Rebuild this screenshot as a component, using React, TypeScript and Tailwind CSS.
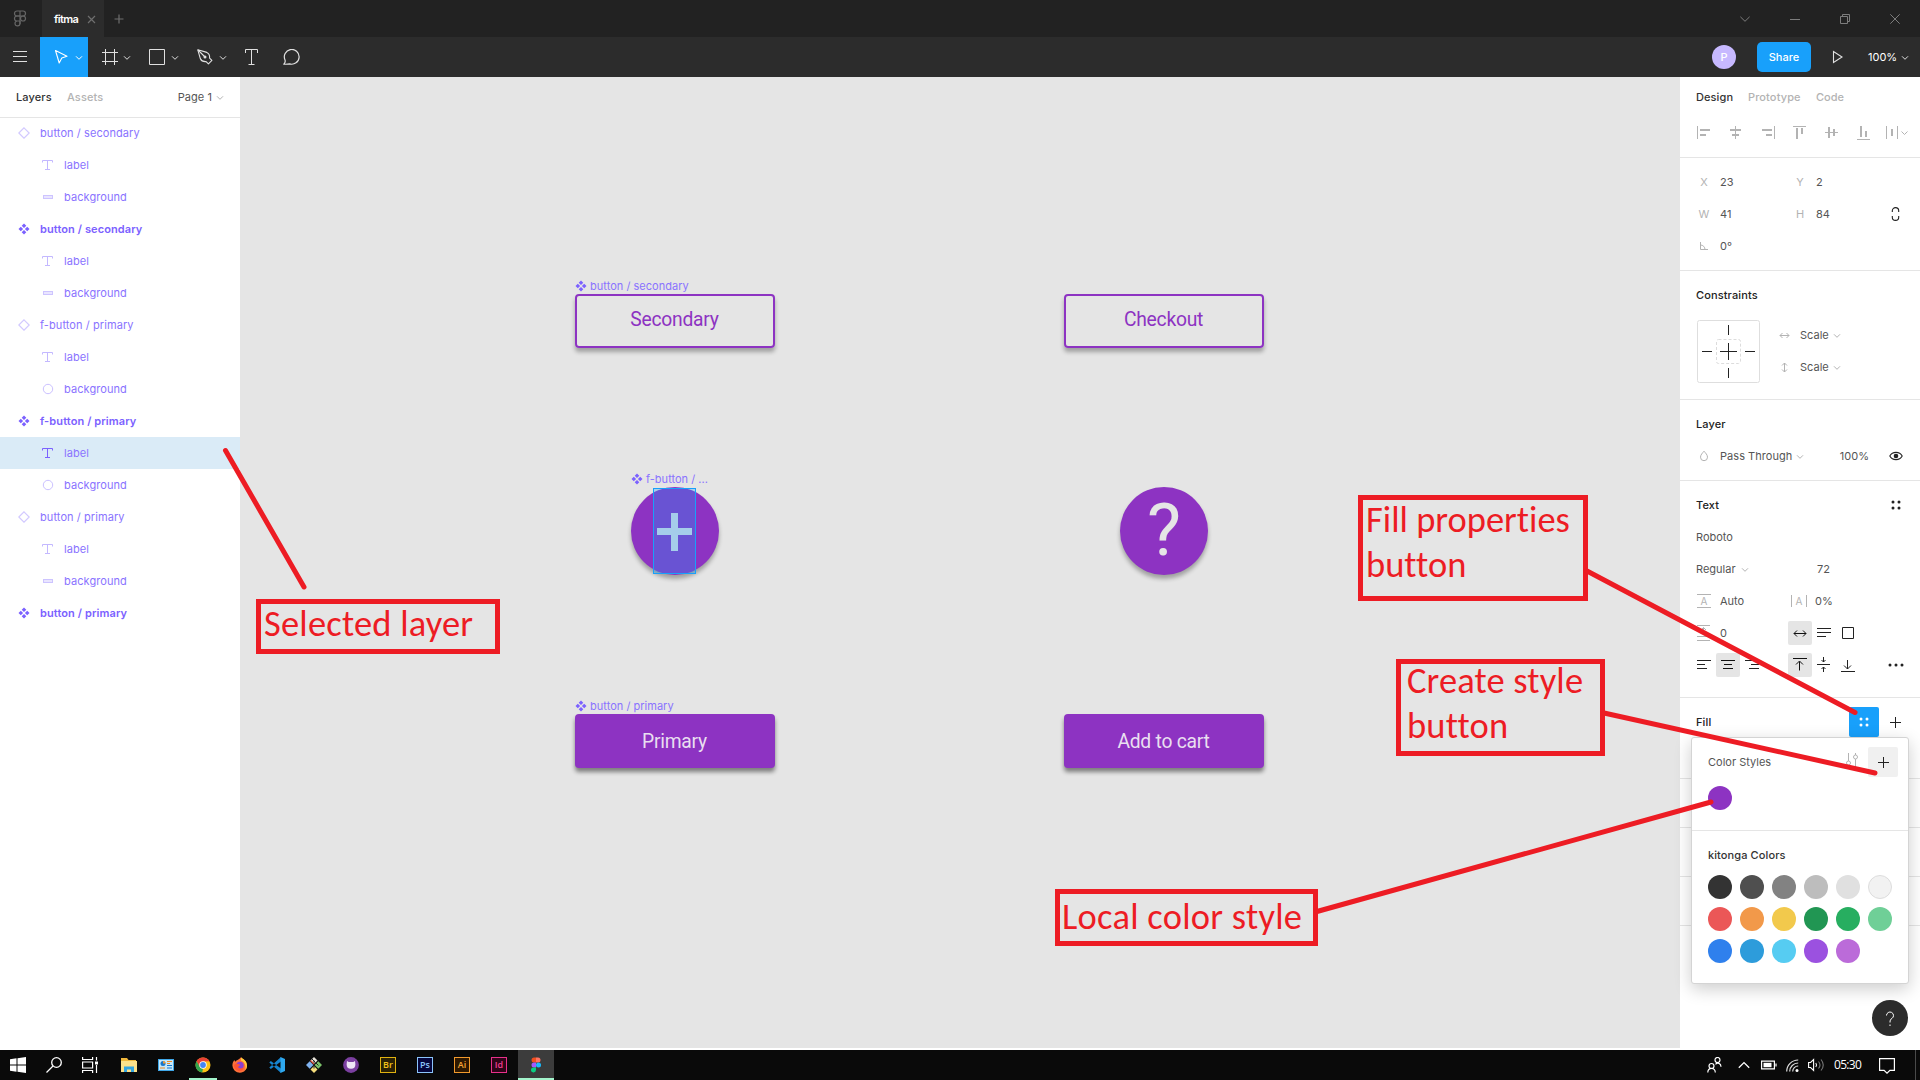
import React from 'react';

type IconProps = {
  w?: number;
  h?: number;
  className?: string;
  sw?: number;
  children: React.ReactNode;
};

function Icon({ w = 16, h = 16, className = '', sw = 1, children }: IconProps) {
  return (
    <svg
      width={w}
      height={h}
      viewBox={`0 0 ${w} ${h}`}
      fill="none"
      stroke="currentColor"
      strokeWidth={sw}
      className={`block shrink-0 ${className}`}
    >
      {children}
    </svg>
  );
}

function Chevron({ className = '' }: { className?: string }) {
  return (
    <Icon w={8} h={6} className={className}>
      <path d="M1 1.3 4 4.3 7 1.3" />
    </Icon>
  );
}

/* ---------- title bar and toolbar ---------- */

function TitleBar() {
  return (
    <header className="flex h-[37px] shrink-0 items-stretch bg-[#222222] text-[#6e6e6e]">
      <div className="flex w-[42px] items-center pl-[13px] pt-px">
        <Icon w={14} h={18} className="text-[#666]" sw={1.2}>
          <rect x="1.5" y="1" width="11" height="5" rx="2.5" />
          <path d="M7 1v13" />
          <path d="M7 6H4a2.5 2.5 0 0 0 0 5h3M4 11a2.5 2.5 0 1 0 3 2.5V11" />
          <circle cx="10" cy="8.5" r="2.5" />
        </Icon>
      </div>
      <div className="flex w-[62px] items-center bg-[#2c2c2c] pl-3 pt-[2px]">
        <span className="w-[33px] text-[11px] font-semibold tracking-[-0.6px] text-white">fitma</span>
        <Icon w={9} h={9} sw={1.2}>
          <path d="M1 1l7 7M8 1 1 8" />
        </Icon>
      </div>
      <div className="flex items-center pl-[10px] pt-px">
        <Icon w={10} h={10} sw={1.2}>
          <path d="M5 .5v9M.5 5h9" />
        </Icon>
      </div>
      <div className="ml-auto flex items-center pt-px text-[#7d7d7d]">
        <div className="flex w-[50px] justify-center">
          <Icon w={10} h={10}>
            <path d="M.4 2.8 5 7.3l4.6-4.5" />
          </Icon>
        </div>
        <div className="flex w-[50px] justify-center">
          <Icon w={10} h={10}>
            <path d="M0 5.5h10" />
          </Icon>
        </div>
        <div className="flex w-[50px] justify-center">
          <Icon w={10} h={10}>
            <path d="M.5 2.5h7v7h-7zM2.5 2.5v-2h7v7h-2" />
          </Icon>
        </div>
        <div className="flex w-[50px] justify-center">
          <Icon w={10} h={10}>
            <path d="M.3.3l9.4 9.4M9.7.3.3 9.7" />
          </Icon>
        </div>
      </div>
    </header>
  );
}

function Tool({ active = false, children }: { active?: boolean; children: React.ReactNode }) {
  return (
    <div className={`flex w-12 items-center pl-[13px] ${active ? 'bg-[#18a0fb] text-white' : ''}`}>
      {children}
      <Chevron className="ml-[5px] mt-px" />
    </div>
  );
}

function Toolbar() {
  return (
    <div className="flex h-10 shrink-0 items-stretch bg-[#2c2c2c] text-[#e0e0e0]">
      <div className="flex w-10 items-center justify-center">
        <Icon w={14} h={14}>
          <path d="M0 1.5h14M0 6.5h14M0 11.5h14" />
        </Icon>
      </div>
      <Tool active>
        <Icon w={17} h={16} sw={1.1}>
          <path d="M2.500 1.500 14 7.200 8.800 9 6.200 14z" strokeLinejoin="round" />
        </Icon>
      </Tool>
      <Tool>
        <Icon w={17} h={16}>
          <path d="M1 3.5h16M1 12.5h16M4.5 0v16M13.5 0v16" />
        </Icon>
      </Tool>
      <Tool>
        <Icon w={17} h={16}>
          <path d="M.5.5h15v15H.5z" />
        </Icon>
      </Tool>
      <Tool>
        <Icon w={17} h={16} sw={1.1}>
          <path d="M.8.8 9.8 3.4c2 .8 3 3 2.800 5.700L14.900 11.400 11.400 14.900 9.100 12.600C6.400 12.800 4.200 11.800 3.400 9.800z" strokeLinejoin="round" />
          <path d="M1 1l6.500 6.500" />
          <circle cx="8" cy="8" r="1.500" fill="currentColor" stroke="none" />
        </Icon>
      </Tool>
      <div className="flex w-10 items-center justify-center">
        <Icon w={14} h={16}>
          <path d="M.5 4V.5h12V4M6.500 .5v15M3.500 15.500h6" />
        </Icon>
      </div>
      <div className="flex w-10 items-center justify-center">
        <Icon w={18} h={16} sw={1.200}>
          <path d="M.8 15.200c1.400-1.300 1.700-2.600 1.200-4.300A7.400 7.400 0 1 1 6.600 14.900c-2 .4-4 .4-5.800.3z" strokeLinejoin="round" />
        </Icon>
      </div>
      <div className="ml-auto flex items-center">
        <div className="flex size-6 items-center justify-center rounded-full bg-[#c7b9ff] text-[11px] font-medium text-white">
          P
        </div>
        <div className="ml-[21px] flex h-[30px] w-[54px] items-center justify-center rounded-[5px] bg-[#18a0fb] text-[11px] font-medium tracking-[0.050px] text-white">
          Share
        </div>
        <Icon w={12} h={14} className="ml-[21px]" sw={1.100}>
          <path d="M1.500 1.500v11l8.500-5.500z" />
        </Icon>
        <span className="ml-[24px] w-[33px] text-[11px] text-white">100%</span>
        <Chevron className="mr-[11px] mt-px" />
      </div>
    </div>
  );
}

/* ---------- layers panel ---------- */

type LayerKind = 'instance' | 'component' | 'text' | 'rect' | 'ellipse';
type Layer = { kind: LayerKind; name: string; selected?: boolean };

const layers: Layer[] = [
  { kind: 'instance', name: 'button / secondary' },
  { kind: 'text', name: 'label' },
  { kind: 'rect', name: 'background' },
  { kind: 'component', name: 'button / secondary' },
  { kind: 'text', name: 'label' },
  { kind: 'rect', name: 'background' },
  { kind: 'instance', name: 'f-button / primary' },
  { kind: 'text', name: 'label' },
  { kind: 'ellipse', name: 'background' },
  { kind: 'component', name: 'f-button / primary' },
  { kind: 'text', name: 'label', selected: true },
  { kind: 'ellipse', name: 'background' },
  { kind: 'instance', name: 'button / primary' },
  { kind: 'text', name: 'label' },
  { kind: 'rect', name: 'background' },
  { kind: 'component', name: 'button / primary' },
];

function ComponentGlyph() {
  return (
    <svg width="12" height="12" viewBox="0 0 12 12" fill="#7b61ff" className="block shrink-0">
      <path d="M6 .5 8.300 2.800 6 5.100 3.700 2.800zM6 6.900l2.300 2.300L6 11.500 3.700 9.200zM2.800 3.700 5.100 6 2.800 8.300.5 6zM9.200 3.700 11.500 6 9.200 8.300 6.900 6z" />
    </svg>
  );
}

function LayerGlyph({ kind, selected }: { kind: LayerKind; selected?: boolean }) {
  if (kind === 'component') return <ComponentGlyph />;
  if (kind === 'instance')
    return (
      <Icon w={12} h={12} className="text-[#d2c9ff]" sw={1.200}>
        <path d="M6 .8 11.200 6 6 11.200.8 6z" />
      </Icon>
    );
  if (kind === 'text')
    return (
      <Icon w={12} h={12} className={selected ? 'text-[#7b61ff]' : 'text-[#c3b8ff]'}>
        <path d="M.5 3.500v-2h10v2M5.500 1.500v9M3 10.500h5" />
      </Icon>
    );
  if (kind === 'rect')
    return (
      <Icon w={12} h={12} className="text-[#cdc4ff]">
        <rect x="1.500" y="4.500" width="9" height="3" fill="#e9e5ff" />
      </Icon>
    );
  return (
    <Icon w={12} h={12} className="text-[#cbc1ff]">
      <circle cx="6" cy="6" r="4.700" />
    </Icon>
  );
}

function LayersPanel() {
  return (
    <aside className="w-60 shrink-0 bg-white">
      <div className="-mb-px flex h-[41px] items-center border-b border-[#e5e5e5] pl-4 text-[11px]">
        <span className="w-[51px] font-medium tracking-[0.100px] text-[#333]">Layers</span>
        <span className="font-medium tracking-[0.1px] text-[#b3b3b3]">Assets</span>
        <span className="ml-auto tracking-[0.05px] text-[#555]">Page 1</span>
        <Chevron className="ml-1 mr-4 mt-px text-[#b3b3b3]" />
      </div>
      {layers.map((l, i) => {
        const nested = l.kind === 'text' || l.kind === 'rect' || l.kind === 'ellipse';
        return (
          <div
            key={i}
            className={`flex h-8 items-center text-[11px] text-[#8a73ff] ${nested ? 'pl-[42px]' : 'pl-[18px]'} ${
              l.selected ? 'bg-[#daebf7]' : ''
            }`}
          >
            <LayerGlyph kind={l.kind} selected={l.selected} />
            <span
              className={`ml-[10px] ${
                l.kind === 'component' ? 'font-semibold tracking-[0.100px] text-[#7b61ff]' : 'tracking-[0.080px]'
              }`}
            >
              {l.name}
            </span>
          </div>
        );
      })}
    </aside>
  );
}

/* ---------- canvas ---------- */

function FrameLabel({ className, children }: { className: string; children: React.ReactNode }) {
  return (
    <div className={`absolute flex h-4 items-center whitespace-nowrap text-[11px] text-[#8a73ff] ${className}`}>
      <ComponentGlyph />
      <span className="ml-[3px] tracking-[0.020px]">{children}</span>
    </div>
  );
}

function CanvasButton({ className, outline, children }: { className: string; outline?: boolean; children: React.ReactNode }) {
  return (
    <div
      className={`absolute flex h-[54px] w-[200px] items-center justify-center rounded-[4px] pr-px font-['Roboto'] text-[19.300px] tracking-[-0.250px] ${
        outline
          ? 'border-2 border-[#8d33c2] pb-px text-[#8d33c2] shadow-[0_4px_4px_rgba(0,0,0,0.300)]'
          : 'bg-[#8d33c2] pt-[2px] text-[#e9dff0] shadow-[0_4px_4px_rgba(0,0,0,0.450)]'
      } ${className}`}
    >
      {children}
    </div>
  );
}

function Canvas() {
  return (
    <main className="relative flex-1 overflow-hidden bg-[#e5e5e5]">
      <FrameLabel className="left-[335px] top-[201px]">button / secondary</FrameLabel>
      <CanvasButton outline className="left-[335px] top-[217px]">Secondary</CanvasButton>
      <CanvasButton outline className="left-[824px] top-[217px]">Checkout</CanvasButton>

      <FrameLabel className="left-[391px] top-[394px]">f-button / ...</FrameLabel>
      <div className="absolute left-[391px] top-[410px] size-[88px] rounded-full bg-[#8d33c2] shadow-[0_4px_4px_rgba(0,0,0,0.300)]" />
      <div className="absolute left-[413px] top-[411px] h-[86px] w-[43px] border border-[#18a0fb] bg-[#18a0fb]/30">
        <svg width="41" height="84" viewBox="0 0 41 84" className="block">
          <path d="M3 39h14V24h7v15h14v7H24v16h-7V46H3z" fill="#a5cdea" />
        </svg>
      </div>
      <div className="absolute left-[880px] top-[410px] flex size-[88px] items-center justify-center rounded-full bg-[#8d33c2] font-['Roboto'] text-[72px] leading-none text-[#e5e5e5] shadow-[0_4px_4px_rgba(0,0,0,0.300)]">
        ?
      </div>

      <FrameLabel className="left-[335px] top-[621px]">button / primary</FrameLabel>
      <CanvasButton className="left-[335px] top-[637px]">Primary</CanvasButton>
      <CanvasButton className="left-[824px] top-[637px]">Add to cart</CanvasButton>
    </main>
  );
}

/* ---------- design panel ---------- */

function Section({ className = '', children }: { className?: string; children?: React.ReactNode }) {
  return <section className={`border-b border-[#e5e5e5] py-2 ${className}`}>{children}</section>;
}

function Row({ children }: { children: React.ReactNode }) {
  return <div className="flex h-8 items-center pl-4">{children}</div>;
}

function Heading({ children }: { children: React.ReactNode }) {
  return <h3 className="font-medium tracking-[0.120px] text-[#222]">{children}</h3>;
}

function Field({ label, value }: { label: React.ReactNode; value: string }) {
  return (
    <>
      <span className="flex w-4 justify-center text-[#b3b3b3]">{label}</span>
      <span className="ml-2 w-[72px]">{value}</span>
    </>
  );
}

const alignPaths = [
  'M9 9h1v13H9zM12 12h10v2H12zM12 17h6v2h-6z',
  'M15 9h1v13h-1zM10 12h11v2H10zM12 17h7v2h-7z',
  'M22 9h1v13h-1zM10 12h10v2H10zM14 17h6v2h-6z',
  'M9 9h13v1H9zM12 11h2v11h-2zM17 11h2v6h-2z',
  'M9 15h13v1H9zM12 10h2v11h-2zM17 12h2v7h-2z',
  'M9 22h13v1H9zM12 9h2v11h-2zM17 14h2v6h-2z',
  'M6 9h1v13H6zM17 9h1v13h-1zM11 12h2v7h-2z',
];

function FourDots({ className = '' }: { className?: string }) {
  return (
    <svg width="10" height="10" viewBox="0 0 10 10" fill="currentColor" className={className}>
      <circle cx="2" cy="2" r="1.500" />
      <circle cx="8" cy="2" r="1.500" />
      <circle cx="2" cy="8" r="1.500" />
      <circle cx="8" cy="8" r="1.500" />
    </svg>
  );
}

const swatches = [
  ['bg-[#333333]', 'bg-[#4f4f4f]', 'bg-[#828282]', 'bg-[#bdbdbd]', 'bg-[#e0e0e0]', 'bg-[#f2f2f2] border border-[#dddddd]'],
  ['bg-[#eb5757]', 'bg-[#f2994a]', 'bg-[#f2c94c]', 'bg-[#219653]', 'bg-[#27ae60]', 'bg-[#6fcf97]'],
  ['bg-[#2f80ed]', 'bg-[#2d9cdb]', 'bg-[#56ccf2]', 'bg-[#9b51e0]', 'bg-[#bb6bd9]'],
];

function ColorStyles() {
  return (
    <div className="absolute left-[11px] top-[660px] h-[247px] w-[218px] rounded-[3px] border border-[#d4d4d4] bg-white shadow-[0_5px_17px_rgba(0,0,0,0.200)]">
      <div className="flex h-12 items-center pl-4">
        <span className="text-[#555]">Color Styles</span>
        <Icon w={14} h={16} className="-mt-1 ml-auto mr-[9px] text-[#b3b3b3]">
          <path d="M3.500 1v8M3.500 13v2M10.500 1v2M10.500 7v8" />
          <circle cx="3.500" cy="11" r="2" />
          <circle cx="10.500" cy="5" r="2" />
        </Icon>
        <div className="mr-[10px] flex size-[30px] items-center justify-center rounded-[2px] bg-[#f0f0f0] text-[#222]">
          <Icon w={11} h={11}>
            <path d="M5.500 0v11M0 5.500h11" />
          </Icon>
        </div>
      </div>
      <div className="h-[45px] border-b border-[#e5e5e5] pl-4">
        <div className="size-6 rounded-full bg-[#8d33c2]" />
      </div>
      <div className="flex h-11 items-center pl-4 pt-1">
        <span className="font-medium tracking-[0.100px] text-[#333]">kitonga Colors</span>
      </div>
      <div className="flex flex-col gap-2 pl-4">
        {swatches.map((row, i) => (
          <div key={i} className="flex gap-2">
            {row.map((c) => (
              <div key={c} className={`size-6 rounded-full ${c}`} />
            ))}
          </div>
        ))}
      </div>
    </div>
  );
}

function DesignPanel() {
  return (
    <aside className="relative w-60 shrink-0 bg-white text-[11px] text-[#555]">
      <div className="flex h-10 items-center pl-4 font-medium text-[#b3b3b3]">
        <span className="w-[52px] tracking-[0.100px] text-[#333]">Design</span>
        <span className="w-[68px] tracking-[0.120px]">Prototype</span>
        <span>Code</span>
      </div>
      <div className="flex h-[41px] items-start border-b border-[#e5e5e5] pl-2">
        {alignPaths.map((d) => (
          <svg key={d} width="32" height="32" viewBox="0 0 32 32" fill="#b3b3b3" className="block">
            <path d={d} />
            {d === alignPaths[6] && <path d="M21.500 14.500l3 3 3-3" fill="none" stroke="#b3b3b3" />}
          </svg>
        ))}
      </div>

      <Section>
        <Row>
          <Field label="X" value="23" />
          <Field label="Y" value="2" />
        </Row>
        <Row>
          <Field label="W" value="41" />
          <Field label="H" value="84" />
          <Icon w={9} h={14} className="ml-[3px] text-[#222]" sw={1.100}>
            <path d="M1.300 5V3.800a3.200 3.200 0 0 1 6.400 0V5M1.300 9v1.200a3.200 3.200 0 0 0 6.400 0V9" />
          </Icon>
        </Row>
        <Row>
          <Field
            label={
              <Icon w={8} h={8}>
                <path d="M.5 0v7.500H8M.5 3a4.500 4.500 0 0 1 4.500 4.500" />
              </Icon>
            }
            value="0°"
          />
        </Row>
      </Section>

      <Section>
        <Row>
          <Heading>Constraints</Heading>
        </Row>
        <div className="flex h-20 pl-[17px] pt-[9px]">
          <Icon w={63} h={63} className="text-[#222]">
            <rect x=".5" y=".5" width="62" height="62" rx="2" stroke="#dedede" />
            <rect x="19.500" y="19.500" width="24" height="24" rx="2" stroke="#dcdcdc" strokeDasharray="3 2" />
            <path d="M31.500 5v10M31.500 48v10M5 31.500h10M48 31.500h10M31.500 23v17M23 31.500h17" />
          </Icon>
          <div className="-mt-px flex flex-col pl-[19px]">
            <div className="flex h-8 items-center">
              <Icon w={11} h={11} className="text-[#b3b3b3]">
                <path d="M1 5.500h9M3.500 3 1 5.500 3.500 8M7.500 3 10 5.500 7.500 8" />
              </Icon>
              <span className="ml-[10px]">Scale</span>
              <Chevron className="ml-[4px] mt-px text-[#b3b3b3]" />
            </div>
            <div className="flex h-8 items-center">
              <Icon w={11} h={11} className="text-[#b3b3b3]">
                <path d="M5.500 1v9M3 3.500 5.500 1 8 3.500M3 7.500 5.500 10 8 7.500" />
              </Icon>
              <span className="ml-[10px]">Scale</span>
              <Chevron className="ml-[4px] mt-px text-[#b3b3b3]" />
            </div>
          </div>
        </div>
      </Section>

      <Section>
        <Row>
          <Heading>Layer</Heading>
        </Row>
        <Row>
          <span className="flex w-4 justify-center text-[#b3b3b3]">
            <Icon w={10} h={12}>
              <path d="M5 1.200C6.500 3 8.500 4.800 8.500 7.200a3.500 3.500 0 0 1-7 0C1.500 4.800 3.500 3 5 1.200z" />
            </Icon>
          </span>
          <span className="ml-2 tracking-[0.040px]">Pass Through</span>
          <Chevron className="ml-1 mt-px text-[#b3b3b3]" />
          <span className="ml-auto">100%</span>
          <Icon w={14} h={10} className="ml-5 mr-[17px] text-[#222]" sw={1.100}>
            <path d="M.8 5C3.500.2 10.500.2 13.200 5 10.500 9.800 3.500 9.800.8 5z" />
            <circle cx="7" cy="5" r="2.300" fill="currentColor" stroke="none" />
          </Icon>
        </Row>
      </Section>

      <Section className="pb-4">
        <Row>
          <Heading>Text</Heading>
          <FourDots className="ml-auto mr-[19px] text-[#222]" />
        </Row>
        <Row>Roboto</Row>
        <Row>
          <span>Regular</span>
          <Chevron className="ml-[5px] mt-px text-[#b3b3b3]" />
          <span className="ml-auto w-[103px]">72</span>
        </Row>
        <Row>
          <span className="ml-px flex h-[14px] w-[14px] shrink-0 items-center justify-center border-y border-[#b3b3b3] text-[10px] leading-none text-[#b3b3b3]">
            A
          </span>
          <span className="ml-[9px] w-[71px]">Auto</span>
          <span className="flex h-[12px] w-4 items-center justify-center border-x border-[#b3b3b3] text-[10px] leading-none text-[#b3b3b3]">
            A
          </span>
          <span className="ml-2">0%</span>
        </Row>
        <Row>
          <Icon w={16} h={18} className="text-[#b3b3b3]">
            <path d="M1 1.500h13M1 12.500h13M1 16.500h13M7.500 3.500v6M5 6l2.500-2.500L10 6" />
          </Icon>
          <span className="ml-2 w-[68px]">0</span>
          <span className="flex size-6 items-center justify-center rounded-[2px] bg-[#e5e5e5] text-[#111]">
            <Icon w={14} h={11}>
              <path d="M1 5.500h12M4 2.500 1 5.500l3 3M10 2.500l3 3-3 3" />
            </Icon>
          </span>
          <Icon w={24} h={24} className="text-[#222]">
            <path d="M5 7.500h14M5 11.500h14M5 15.500h9" />
          </Icon>
          <Icon w={24} h={24} className="text-[#222]">
            <path d="M6.500 6.500h11v11h-11z" />
          </Icon>
        </Row>
        <div className="flex h-8 items-center pl-3 text-[#222]">
          <Icon w={24} h={24}>
            <path d="M5 7.500h14M5 11.500h8M5 15.500h10" />
          </Icon>
          <span className="size-6 rounded-[2px] bg-[#e5e5e5] text-[#111]">
            <Icon w={24} h={24}>
              <path d="M5 7.500h14M8 11.500h8M7 15.500h10" />
            </Icon>
          </span>
          <Icon w={24} h={24}>
            <path d="M5 7.500h14M11 11.500h8M9 15.500h10" />
          </Icon>
          <span className="ml-6 size-6 rounded-[2px] bg-[#e5e5e5] text-[#111]">
            <Icon w={24} h={24}>
              <path d="M5 5.500h14M11.500 17.500v-9M8 11.500l3.500-3.500 3.500 3.500" />
            </Icon>
          </span>
          <Icon w={24} h={24}>
            <path d="M5 11.500h13M11.500 4v5M9.500 7l2 2 2-2M11.500 19v-5M9.500 16l2-2 2 2" />
          </Icon>
          <Icon w={24} h={24}>
            <path d="M5 18.500h14M11.500 7v9M8 12.500l3.500 3.500 3.500-3.500" />
          </Icon>
          <svg width="16" height="4" viewBox="0 0 16 4" fill="currentColor" className="ml-auto mr-4">
            <circle cx="2" cy="2" r="1.500" />
            <circle cx="8" cy="2" r="1.500" />
            <circle cx="14" cy="2" r="1.500" />
          </svg>
        </div>
      </Section>

      <Section className="h-[81px]">
        <Row>
          <Heading>Fill</Heading>
          <span className="ml-auto flex size-[30px] items-center justify-center rounded-[2px] bg-[#18a0fb] text-white">
            <FourDots className="-mt-px" />
          </span>
          <Icon w={11} h={11} className="ml-[11px] mr-[19px] text-[#222]">
            <path d="M5.500 0v11M0 5.500h11" />
          </Icon>
        </Row>
      </Section>
      <div className="h-[49px] border-b border-[#e5e5e5]" />
      <div className="h-[49px] border-b border-[#e5e5e5]" />
      <div className="h-[49px] border-b border-[#e5e5e5]" />

      <ColorStyles />

      <div className="absolute left-[192px] top-[923px] flex size-9 items-center justify-center rounded-full bg-[#2c2c2c] text-white">
        <Icon w={10} h={16} className="mt-px">
          <path d="M1.500 4.500a3.500 3.500 0 1 1 5.500 2.900C5.500 8.300 5 9 5 11.500M5 13.500V15" />
        </Icon>
      </div>
    </aside>
  );
}

/* ---------- annotations ---------- */

function Note({ className, children }: { className: string; children: React.ReactNode }) {
  return (
    <div
      className={`absolute whitespace-nowrap border-[5px] border-[#ed1c24] font-['Carlito','Lato',sans-serif] text-[36.500px] leading-[45px] text-[#ed1c24] [font-variant-ligatures:none] ${className}`}
    >
      <div className="-mt-[3px]">{children}</div>
    </div>
  );
}

function Annotations() {
  return (
    <div className="pointer-events-none absolute inset-0">
      <Note className="left-[256px] top-[599px] h-[55px] w-[244px] pl-[3px] tracking-[0.200px]">Selected layer</Note>
      <Note className="left-[1358px] top-[495px] h-[106px] w-[230px] pl-[3px]">
        Fill properties
        <br />
        button
      </Note>
      <Note className="left-[1396px] top-[659px] h-[97px] w-[209px] pl-[6px] tracking-[0.150px]">
        <div className="-mt-[6px]">
          Create style
          <br />
          button
        </div>
      </Note>
      <Note className="left-[1055px] top-[889px] h-[57px] w-[263px] pl-[2px] pt-[3px] tracking-[0.250px]">Local color style</Note>
      <svg
        width="1920"
        height="1080"
        viewBox="0 0 1920 1080"
        className="absolute inset-0"
        stroke="#ed1c24"
        strokeWidth="5"
        strokeLinecap="round"
      >
        <path d="M225.500 450.500 304 587M1587 571l268 141.500M1604 713l271 60M1317 911.500l394-109.500" />
      </svg>
    </div>
  );
}

/* ---------- taskbar ---------- */

function AdobeTile({ label, className }: { label: string; className: string }) {
  return (
    <div
      className={`flex size-4 items-center justify-center border pb-px font-['Open_Sans'] text-[9px] font-semibold leading-none ${className}`}
    >
      {label}
    </div>
  );
}

function TaskCell({ active = false, running = false, children }: { active?: boolean; running?: boolean; children: React.ReactNode }) {
  return (
    <div className={`relative mr-px flex h-[30px] w-9 items-center justify-center ${active ? 'bg-[#3c3c3c]' : ''}`}>
      {children}
      {running && (
        <div className={`absolute bottom-0 h-[2px] bg-[#a3f5cc] ${active ? 'inset-x-0' : 'inset-x-1'}`} />
      )}
    </div>
  );
}

function Logo({ children }: { children: React.ReactNode }) {
  return (
    <svg width="16" height="16" viewBox="0 0 16 16" fill="none" className="block">
      {children}
    </svg>
  );
}

function Taskbar() {
  return (
    <footer className="flex h-[30px] shrink-0 items-center bg-[#0a0a0a] text-white">
      <div className="flex w-9 justify-center">
        <Logo>
          <path d="M0 2.300 6.500 1.300v6.200H0zM7.500 1.200 16 0v7.500H7.500zM0 8.500h6.500v6.200L0 13.700zM7.500 8.500H16V16l-8.500-1.200z" fill="#fff" />
        </Logo>
      </div>
      <div className="flex w-9 justify-center">
        <Logo>
          <g stroke="#fff" strokeWidth="1.300">
            <circle cx="10.500" cy="5.500" r="4.800" />
            <path d="M7 9 .5 15.500" />
          </g>
        </Logo>
      </div>
      <div className="mr-[3px] flex w-9 justify-center">
        <Logo>
          <path d="M.6 0v2.500h10V0M.6 16v-2.500h10V16M.6 5h10v6H.6zM14.500 0v3.500M14.500 8v8" stroke="#fff" strokeWidth="1.200" />
          <path d="M13 4.500h3v3h-3z" fill="#fff" />
        </Logo>
      </div>
      <TaskCell>
        <Logo>
          <path d="M0 1h6l1.500 2H15v3H0z" fill="#f0b83c" />
          <path d="M0 4h16v11H0z" fill="#fde18a" />
          <path d="M3 15V9.500h10V15h-3v-2.500H6V15z" fill="#35a5e0" />
        </Logo>
      </TaskCell>
      <TaskCell>
        <Logo>
          <path d="M0 2h16v12H0z" fill="#3fa7e8" />
          <path d="M1 3h14v10H1z" fill="#c4e8fb" />
          <circle cx="5" cy="6.500" r="2.500" fill="#1976c9" />
          <path d="M5 6.500V4a2.500 2.500 0 0 1 2.500 2.500z" fill="#f39a2d" />
          <path d="M9 4.500h5M9 6.500h3M2 11h5" stroke="#f08a24" />
          <path d="M9 8.500h5M9 11h5" stroke="#1976c9" />
        </Logo>
      </TaskCell>
      <TaskCell running>
        <Logo>
          <circle cx="8" cy="8" r="7.500" fill="#fbc116" />
          <path d="M1.500 4.250A7.500 7.500 0 0 1 14.500 4.250L8 4.500 4.750 9.900z" fill="#e94235" />
          <path d="M1.500 4.250 4.800 9.850 8 11.700 7.200 15.450A7.500 7.500 0 0 1 1.500 4.250z" fill="#31a650" />
          <circle cx="8" cy="8" r="3.700" fill="#fff" />
          <circle cx="8" cy="8" r="2.900" fill="#4285f4" />
        </Logo>
      </TaskCell>
      <TaskCell>
        <Logo>
          <path d="M8 15.800A7.500 7.500 0 0 1 .4 8.500C.4 6 1.300 4.200 2.500 3l.6 1.700C5 2.500 7 3 9 .2c1 1.600 3.500 1.800 5 4.500 2.600 5-.2 11.100-6 11.100z" fill="#ff7139" />
          <path d="M9 .2c1 1.600 3.500 1.800 5 4.500 1.500 3 1.200 6-.5 8.200C14 9 13 5 9 3.500z" fill="#ffce3a" />
          <circle cx="8" cy="8.500" r="3.700" fill="#8b3fd1" />
          <path d="M2 8c2-2 4-1 5.500-.5C9 8.500 6 9.500 6 9.800c.5 2 4 2.200 6 .2-.5 3-2.500 4-4 4-3.500 0-6-2.500-6-6z" fill="#ff5533" />
        </Logo>
      </TaskCell>
      <TaskCell>
        <Logo>
          <path d="M.3 5.400 1.800 4 12 11.500V16zM.3 10.600 1.800 12 12 4.500V0z" fill="#1684cf" />
          <path d="M11.500 0 16 2v12l-4.500 2z" fill="#2fa8ee" />
        </Logo>
      </TaskCell>
      <TaskCell>
        <Logo>
          <path d="M8 0l3.500 3.500L8 7 4.500 3.500z" fill="#e8e4da" />
          <path d="M3.700 4.300 7.400 8l-3.700 3.700L0 8z" fill="#7fb2ef" />
          <path d="M12.300 4.300 16 8l-3.700 3.700L8.600 8z" fill="#7cc36b" />
          <path d="M8 9l3.500 3.500L8 16l-3.500-3.500z" fill="#f6dd7c" />
          <path d="M6 2l3.500 3.500M8 3.500v8M10 6l2.500 2.500" stroke="#222" />
          <path d="M4.500 3.500 8 7" stroke="#d9503f" strokeWidth="1.200" />
        </Logo>
      </TaskCell>
      <TaskCell>
        <Logo>
          <circle cx="8" cy="8" r="7.900" fill="#7b3fa0" />
          <path d="M4 4l1.700 1h4.600L12 4l.4 3.200c0 3-1.400 4.500-4.400 4.500S3.600 10.200 3.600 7.200z" fill="#efe6f6" />
        </Logo>
      </TaskCell>
      <TaskCell>
        <AdobeTile label="Br" className="border-[#e0b110] bg-[#2a2104] text-[#f2c21a]" />
      </TaskCell>
      <TaskCell>
        <AdobeTile label="Ps" className="border-[#8bc4fb] bg-[#06063c] text-[#8bc4fb]" />
      </TaskCell>
      <TaskCell>
        <AdobeTile label="Ai" className="border-[#f29a2c] bg-[#2e1800] text-[#f9a436]" />
      </TaskCell>
      <TaskCell>
        <AdobeTile label="Id" className="border-[#e8308a] bg-[#2e0418] text-[#ee3f90]" />
      </TaskCell>
      <TaskCell active running>
        <Logo>
          <path d="M8 .5H6a2.500 2.500 0 0 0 0 5h2z" fill="#f24e1e" />
          <path d="M8 .5h2a2.500 2.500 0 0 1 0 5H8z" fill="#ff7262" />
          <path d="M8 5.500H6a2.500 2.500 0 0 0 0 5h2z" fill="#a259ff" />
          <circle cx="10.500" cy="8" r="2.500" fill="#1abcfe" />
          <path d="M8 10.500H6A2.500 2.500 0 1 0 8 13z" fill="#0acf83" />
        </Logo>
      </TaskCell>

      <div className="ml-auto flex items-center">
        <Logo>
          <g stroke="#fff" strokeWidth="1.200">
            <circle cx="5.500" cy="9" r="2.500" />
            <path d="M1.800 15.500c0-5.500 7.500-5.500 7.500 0" />
            <circle cx="11.500" cy="3" r="2.500" />
            <path d="M9.500 7.300c2-2.300 5.500-1 5.500 2.500" />
          </g>
        </Logo>
        <Icon w={12} h={8} className="ml-4 text-white" sw={1.300}>
          <path d="M.8 6.800 6 1.600l5.200 5.200" />
        </Icon>
        <Icon w={16} h={10} className="ml-[11px] text-white" sw={1.200}>
          <path d="M.6 1.100h12.800v7.800H.6zM15 3.500v3" />
          <path d="M2.500 2.800h8v4.400h-8z" fill="#fff" stroke="none" />
        </Icon>
        <Icon w={13} h={13} className="ml-[9px] text-[#ddd]" sw={1.200}>
          <path d="M.7 12.500A11.500 11.500 0 0 1 12.200 1M3.700 12.500A8.500 8.500 0 0 1 12.200 4M6.700 12.500A5.500 5.500 0 0 1 12.200 7" />
          <circle cx="11" cy="11.500" r="1.500" fill="#fff" stroke="none" />
        </Icon>
        <Icon w={17} h={14} className="ml-[9px] text-white" sw={1.100}>
          <path d="M.6 4.500h2l3-3v11l-3-3h-2zM7.800 5q1.500 2 0 4" />
          <path d="M10.500 3.500q3 3.500 0 7M13 1.500q4.500 5.500 0 11" stroke="#777" />
        </Icon>
        <span className="ml-[9px] w-[28px] font-['Open_Sans'] text-[12px] leading-none tracking-[-0.700px]">05:30</span>
        <Icon w={16} h={16} className="ml-[17px] mt-px text-white" sw={1.200}>
          <path d="M.6.6h14.800v11.800h-4.500L8 15.200 5.100 12.400H.6z" />
        </Icon>
        <div className="ml-5 mr-1 h-[30px] w-px bg-[#4a4a4a]" />
      </div>
    </footer>
  );
}

export default function App() {
  return (
    <div className="relative flex h-[1080px] w-[1920px] flex-col overflow-hidden bg-white font-['Inter',sans-serif]">
      <TitleBar />
      <Toolbar />
      <div className="mb-[2px] flex min-h-0 flex-1">
        <LayersPanel />
        <Canvas />
        <DesignPanel />
      </div>
      <Taskbar />
      <Annotations />
    </div>
  );
}
